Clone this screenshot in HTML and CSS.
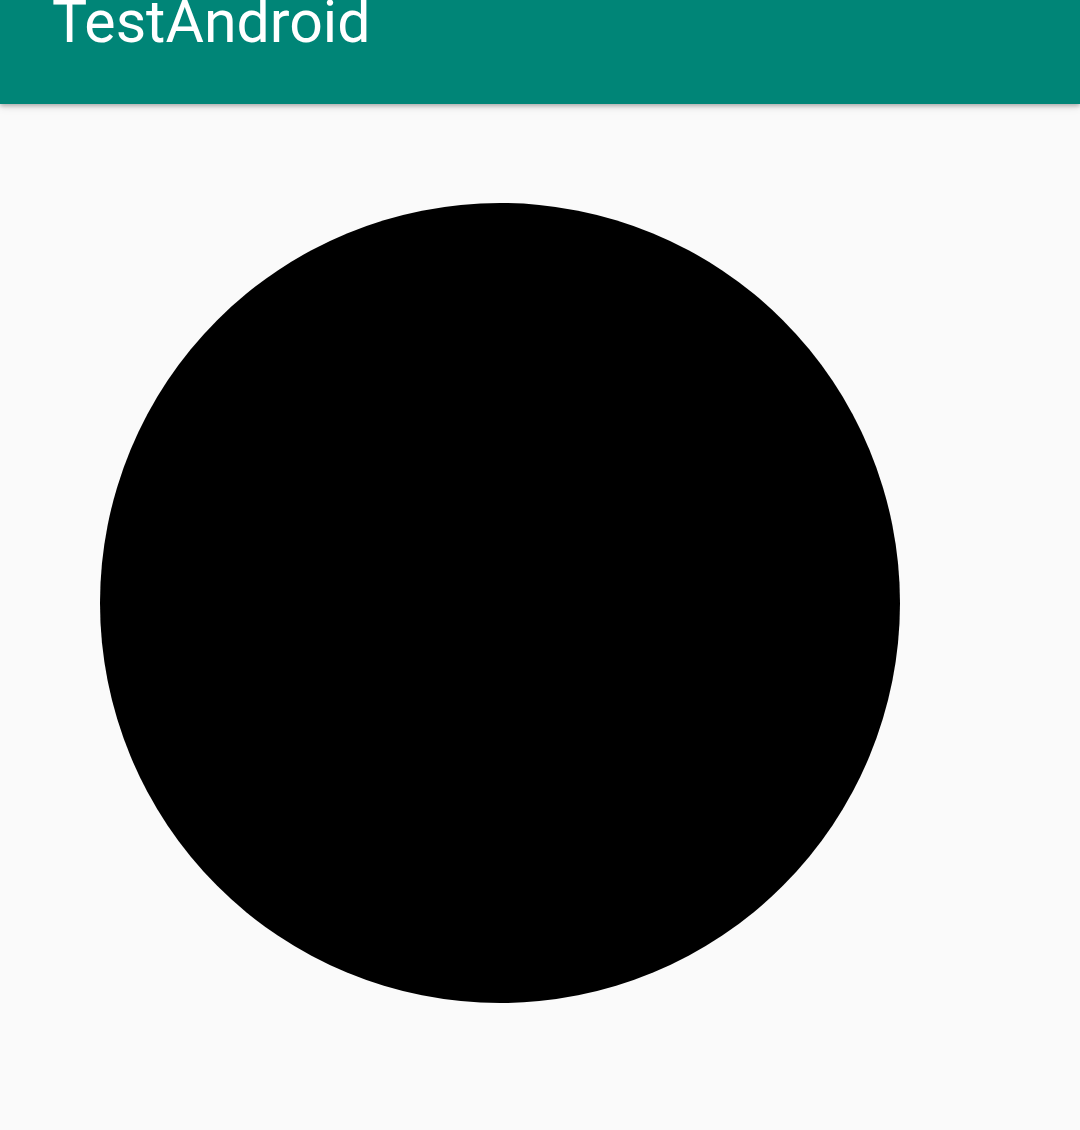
FILE: index.html
```html
<!DOCTYPE html>
<html>
<head>
<meta charset="utf-8">
<link rel="stylesheet" href="styles.css">
</head>
<body>
<header class="toolbar">
  <h1 class="title">TestAndroid</h1>
</header>
<main class="content">
  <div class="circle"></div>
</main>
</body>
</html>
```
FILE: styles.css
```css
html, body {
  margin: 0;
  padding: 0;
  background: #fafafa;
  width: 1080px;
  height: 1130px;
  overflow: hidden;
}
.toolbar {
  position: relative;
  z-index: 1;
  height: 104px;
  background: #008577;
  box-shadow: 0 2px 4px rgba(0,0,0,0.25), 0 4px 8px rgba(0,0,0,0.08);
  display: flex;
  align-items: flex-start;
  padding-left: 52px;
  box-sizing: border-box;
}
.title {
  margin: -8px 0 0 0;
  font-family: Roboto, "Noto Sans", sans-serif;
  font-weight: 400;
  font-size: 59px;
  line-height: 59px;
  color: #ffffff;
}
.content {
  padding: 99px 0 0 100px;
}
.circle {
  width: 800px;
  height: 800px;
  border-radius: 50%;
  background: #000000;
}
```
